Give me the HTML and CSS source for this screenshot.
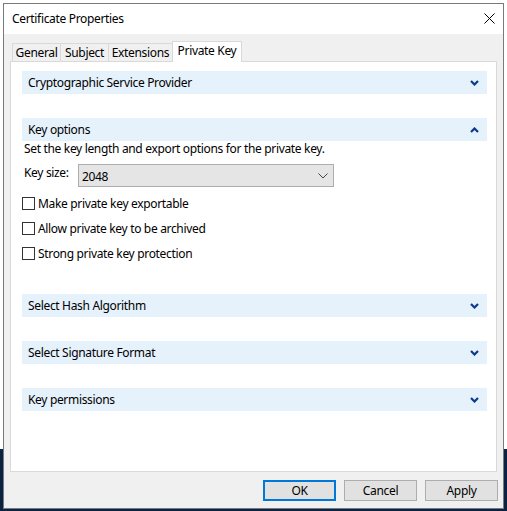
FILE: index.html
```html
<!DOCTYPE html>
<html lang="en">
<head>
  <meta charset="UTF-8" />
  <title>Certificate Properties</title>
  <link rel="stylesheet" href="styles.css">
</head>
<body>
  <div class="window">
    <div class="titlebar">
      <span class="title">Certificate Properties</span>
      <svg class="close" width="11" height="11" viewBox="0 0 11 11">
        <path d="M0.5 0.5 L10.5 10.5 M10.5 0.5 L0.5 10.5" stroke="#000" stroke-width="1" fill="none" />
      </svg>
    </div>

    <div class="client">
      <div class="tabs">
        <div class="tab tab-general">General</div>
        <div class="tab tab-subject">Subject</div>
        <div class="tab tab-ext">Extensions</div>
        <div class="tab tab-key active">Private Key</div>
      </div>

      <div class="panel">
        <div class="section">
          <div class="section-head">
            <span>Cryptographic Service Provider</span>
            <svg class="chev" width="9" height="6" viewBox="0 0 9 6"><path d="M1 1 L4.5 4.5 L8 1" /></svg>
          </div>
        </div>

        <div class="section">
          <div class="section-head">
            <span>Key options</span>
            <svg class="chev" width="9" height="6" viewBox="0 0 9 6"><path d="M1 5 L4.5 1.5 L8 5" /></svg>
          </div>
          <div class="section-body">
            <p class="desc">Set the key length and export options for the private key.</p>
            <div class="keysize">
              <label>Key size:</label>
              <div class="select">
                <span>2048</span>
                <svg width="10" height="6" viewBox="0 0 10 6"><path d="M0.5 0.5 L5 5 L9.5 0.5" stroke="#444" fill="none" /></svg>
              </div>
            </div>
            <div class="check"><span class="box"></span>Make private key exportable</div>
            <div class="check"><span class="box"></span>Allow private key to be archived</div>
            <div class="check"><span class="box"></span>Strong private key protection</div>
          </div>
        </div>

        <div class="section">
          <div class="section-head">
            <span>Select Hash Algorithm</span>
            <svg class="chev" width="9" height="6" viewBox="0 0 9 6"><path d="M1 1 L4.5 4.5 L8 1" /></svg>
          </div>
        </div>

        <div class="section">
          <div class="section-head">
            <span>Select Signature Format</span>
            <svg class="chev" width="9" height="6" viewBox="0 0 9 6"><path d="M1 1 L4.5 4.5 L8 1" /></svg>
          </div>
        </div>

        <div class="section">
          <div class="section-head">
            <span>Key permissions</span>
            <svg class="chev" width="9" height="6" viewBox="0 0 9 6"><path d="M1 1 L4.5 4.5 L8 1" /></svg>
          </div>
        </div>
      </div>

      <div class="buttons">
        <button class="default">OK</button>
        <button>Cancel</button>
        <button>Apply</button>
      </div>
    </div>
  </div>
</body>
</html>
```

FILE: styles.css
```css
:root {
  --face: #f0f0f0;
  --line: #d9d9d9;
  --head: #e5f1fb;
  --chev: #0d3a8c;
}

html, body {
  margin: 0;
  height: 511px;
  overflow: hidden;
}

body {
  padding-top: 3px;
  box-sizing: border-box;
  font-family: 'Noto Sans', sans-serif;
  font-size: 12px;
  letter-spacing: -0.33px;
  color: #000;
  background: linear-gradient(#ffffff 0, #ffffff 449px, #0b2342 449px);
}

.window {
  margin: 0 3px;
  height: 506px;
  box-sizing: border-box;
  border: 1px solid #7a7a7a;
  background: var(--face);
  display: flex;
  flex-direction: column;
}

.titlebar {
  height: 30px;
  background: #fff;
  display: flex;
  align-items: center;
  justify-content: space-between;
  padding: 0 8px 0 8px;
}

.title {
  font-size: 12px;
  margin-top: -1px;
}

.close {
  margin-top: -1px;
}

.client {
  flex: 1;
  display: flex;
  flex-direction: column;
  padding: 7px 6px 0 6px;
}

.tabs {
  display: flex;
  align-items: flex-end;
  height: 21px;
  margin: 0 0 -1px 2px;
  position: relative;
  z-index: 1;
}

.tab {
  height: 18px;
  box-sizing: border-box;
  border: 1px solid var(--line);
  border-bottom: none;
  margin-bottom: 1px;
  margin-right: -1px;
  text-align: center;
  line-height: 17px;
  background: var(--face);
}

.tab-general { width: 49px; }
.tab-subject { width: 49px; }
.tab-ext { width: 65px; }
.tab-key { width: 70px; }

.tab.active {
  height: 21px;
  margin-bottom: 0;
  background: #fff;
  padding-bottom: 3px;
}

.panel {
  height: 411px;
  box-sizing: border-box;
  border: 1px solid var(--line);
  background: #fff;
  padding: 9px 9px 0 11px;
}

.section {
  margin-bottom: 24px;
}

.section-head {
  height: 23px;
  background: var(--head);
  display: flex;
  align-items: center;
  justify-content: space-between;
  padding: 0 8px 0 6px;
}

.chev path {
  stroke: var(--chev);
  stroke-width: 2.2;
  fill: none;
}

.section-body {
  padding: 0 0 4px 2px;
}

.desc {
  margin: 0;
  line-height: 16px;
}

.keysize {
  display: flex;
  align-items: flex-start;
  margin-top: 7px;
}

.keysize label {
  width: 54px;
  line-height: 18px;
}

.select {
  width: 256px;
  height: 23px;
  box-sizing: border-box;
  border: 1px solid #adadad;
  background: #e5e5e5;
  display: flex;
  align-items: center;
  justify-content: space-between;
  padding: 0 5px 0 3px;
}

.select span {
  margin-top: 1px;
}

.check {
  display: flex;
  align-items: center;
  height: 25px;
  margin-left: -2px;
}

.keysize + .check {
  margin-top: 4px;
}

.box {
  width: 13px;
  height: 13px;
  box-sizing: border-box;
  border: 1px solid #333;
  background: #fff;
  margin-right: 3px;
}

.buttons {
  display: flex;
  justify-content: flex-end;
  gap: 8px;
  margin: 8px -1px 0 0;
}

button {
  width: 73px;
  height: 21px;
  border: 1px solid #adadad;
  background: #e1e1e1;
  font-family: inherit;
  font-size: 12px;
  letter-spacing: inherit;
  padding: 0;
  color: #000;
}

button.default {
  border: 2px solid #0078d7;
}
```
